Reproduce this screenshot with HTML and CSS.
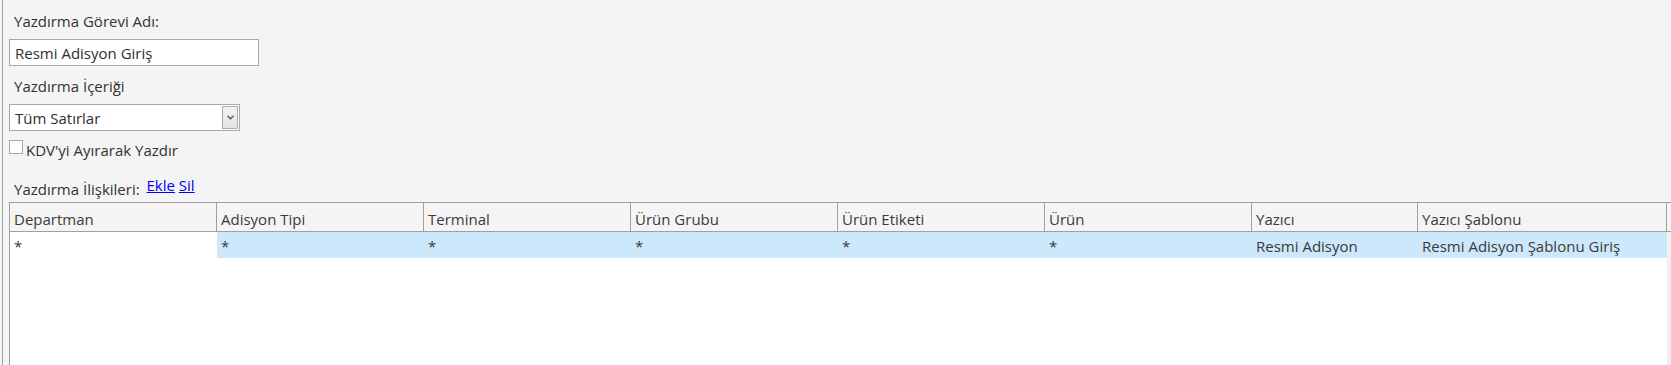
FILE: index.html
```html
<!DOCTYPE html>
<html lang="tr">
<head>
<meta charset="utf-8">
<title>Yazdırma Görevi</title>
<link rel="stylesheet" href="styles.css">
</head>
<body>
<div class="page">
  <div class="form">
    <div class="label">Yazdırma Görevi Adı:</div>
    <div class="textbox">Resmi Adisyon Giriş</div>
    <div class="label">Yazdırma İçeriği</div>
    <div class="select">
      <span class="select-text">Tüm Satırlar</span>
      <span class="dd-btn">
        <svg width="7" height="5" viewBox="0 0 7 5"><path d="M0.5 0.8 L3.5 3.8 L6.5 0.8" fill="none" stroke="#555" stroke-width="1.3"/></svg>
      </span>
    </div>
    <div class="check"><span class="box"></span><span>KDV'yi Ayırarak Yazdır</span></div>
    <div class="label label-links">Yazdırma İlişkileri: <span class="links"><a href="#">Ekle</a> <a href="#">Sil</a></span></div>
  </div>
  <div class="grid">
    <div class="grid-head">
      <div class="th">Departman</div>
      <div class="th">Adisyon Tipi</div>
      <div class="th">Terminal</div>
      <div class="th">Ürün Grubu</div>
      <div class="th">Ürün Etiketi</div>
      <div class="th">Ürün</div>
      <div class="th">Yazıcı</div>
      <div class="th">Yazıcı Şablonu</div>
      <div class="th filler"></div>
    </div>
    <div class="grid-body">
      <div class="rows">
        <div class="tr">
          <div class="td current">*</div>
          <div class="td">*</div>
          <div class="td">*</div>
          <div class="td">*</div>
          <div class="td">*</div>
          <div class="td">*</div>
          <div class="td">Resmi Adisyon</div>
          <div class="td">Resmi Adisyon Şablonu Giriş</div>
        </div>
      </div>
      <div class="vscroll"></div>
    </div>
  </div>
</div>
</body>
</html>
```
FILE: styles.css
```css
html, body {
  margin: 0;
  padding: 0;
  height: 100%;
  overflow: hidden;
}
body {
  background: #f4f4f4;
  font-family: "Open Sans", "Noto Sans", sans-serif;
  font-size: 15px;
  line-height: 20px;
  color: #333;
}
.page {
  margin-left: 2px;
  border-left: 1px solid #a0a0a0;
  padding-left: 6px;
  height: 100%;
  box-sizing: border-box;
  display: flex;
  flex-direction: column;
}
.form {
  display: flex;
  flex-direction: column;
  align-items: flex-start;
}
.label {
  padding: 11px 5px 8px;
  height: 20px;
}
.label + .label { padding-top: 11px; }
.textbox, .select {
  box-sizing: border-box;
  height: 27px;
  border: 1px solid #a9a9a9;
  background: #fff;
  padding: 3px 4px 2px 5px;
  color: #2f2f2f;
}
.textbox { width: 250px; }
.form .textbox + .label { padding-top: 10px; }
.select {
  width: 231px;
  display: flex;
  justify-content: space-between;
  padding: 3px 1px 1px 5px;
}
.select-text { line-height: 20px; }
.dd-btn {
  box-sizing: border-box;
  width: 16px;
  height: 23px;
  margin-top: -2px;
  border: 1px solid #ababab;
  background: linear-gradient(#f2f2f2, #e3e3e3);
  display: flex;
  align-items: center;
  justify-content: center;
}
.check {
  margin-top: 9px;
  display: flex;
  align-items: flex-start;
  height: 20px;
}
.box {
  box-sizing: border-box;
  width: 14px;
  height: 14px;
  border: 1px solid #a6a6a6;
  background: #fdfdfd;
  margin-right: 3px;
}
.label.label-links { padding: 15px 5px 7px 5px; }
.links { margin-left: 3px; vertical-align: 4px; }
.links a { color: #0000ff; text-decoration: underline; }
.grid {
  flex: 1;
  display: flex;
  flex-direction: column;
  border-left: 1px solid #a0a0a0;
  border-top: 1px solid #a0a0a0;
  background: #fff;
  color: #3a3a3a;
}
.grid-head {
  display: grid;
  grid-template-columns: repeat(6, 207px) 166px 249px 1fr;
  background: #f4f4f4;
  border-bottom: 1px solid #a0a0a0;
}
.th {
  box-sizing: border-box;
  height: 28px;
  padding: 6px 4px 0 4px;
  border-right: 1px solid #a0a0a0;
  white-space: nowrap;
  overflow: hidden;
}
.th.filler { border-right: none; }
.grid-body {
  flex: 1;
  display: flex;
}
.rows {
  width: 1657px;
  background: #fff;
}
.tr {
  display: grid;
  grid-template-columns: repeat(6, 207px) 166px 249px;
  background: #cde8fb;
}
.td {
  box-sizing: border-box;
  height: 26px;
  padding: 4px 4px 0 4px;
  white-space: nowrap;
  overflow: hidden;
}
.td.current { background: #fff; }
.vscroll {
  flex: 1;
  background: #f0f0f0;
}
```
